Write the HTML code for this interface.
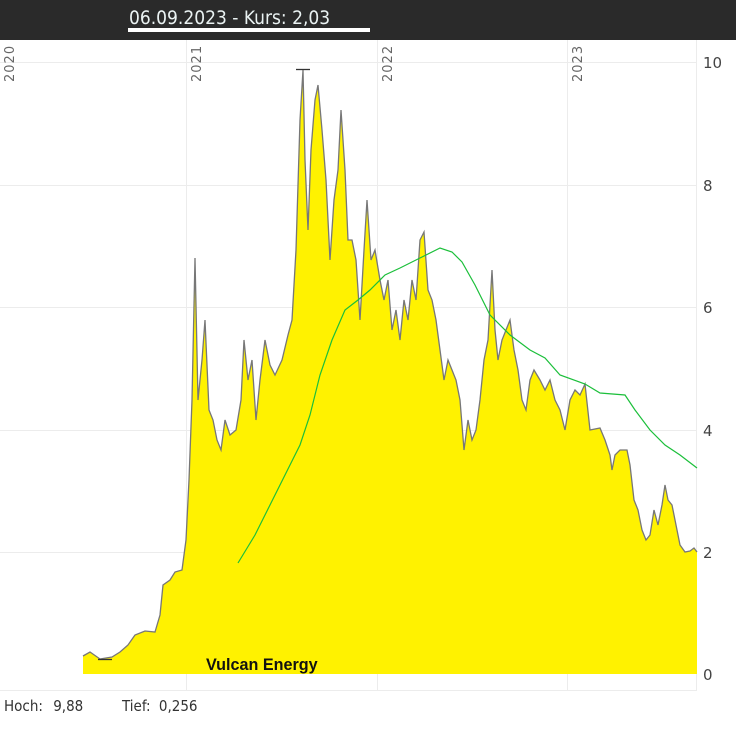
<!DOCTYPE html>
<html><head><meta charset="utf-8"><style>
html,body{margin:0;padding:0;width:736px;height:729px;background:#fff;overflow:hidden;font-family:"Liberation Sans",sans-serif}
</style></head><body>
<svg width="736" height="729" viewBox="0 0 736 729" xmlns="http://www.w3.org/2000/svg">
<g stroke="#ececec" stroke-width="1">
<line x1="0" y1="62.5" x2="697" y2="62.5"/>
<line x1="0" y1="185.5" x2="697" y2="185.5"/>
<line x1="0" y1="307.5" x2="697" y2="307.5"/>
<line x1="0" y1="430.5" x2="697" y2="430.5"/>
<line x1="0" y1="552.5" x2="697" y2="552.5"/>
<line x1="0" y1="690.5" x2="697" y2="690.5"/>
<line x1="186.5" y1="40" x2="186.5" y2="690"/>
<line x1="377.5" y1="40" x2="377.5" y2="690"/>
<line x1="567.5" y1="40" x2="567.5" y2="690"/>
<line x1="696.5" y1="40" x2="696.5" y2="690"/>
</g>
<polygon fill="#fff200" points="83,674 83,656 90,652 100,659 112,657 120,652 128,645 135,635 145,631 155,632 160,615 163,585 170,580 175,572 182,570 186,540 189,480 192,400 195,258 198,400 202,360 205,320 209,410 213,420 217,440 221,450 225,420 230,435 236,430 241,400 244,340 248,380 252,360 256,420 260,380 265,340 270,365 275,375 282,360 288,335 292,320 296,250 300,120 303,70 305,160 308,230 311,150 315,100 318,85 322,130 326,180 330,260 334,200 338,170 341,110 345,170 348,240 352,240 356,260 360,320 364,250 367,200 371,260 375,250 380,280 384,300 388,280 392,330 396,310 400,340 404,300 408,320 412,280 416,300 420,240 424,232 428,290 432,300 436,320 440,350 444,380 448,360 452,370 456,380 460,400 464,450 468,420 472,440 476,430 480,400 484,360 488,340 492,270 495,330 498,360 502,340 506,330 510,320 514,350 518,370 522,400 526,410 530,380 534,370 540,380 545,390 550,380 555,400 560,410 565,430 570,400 575,390 580,395 585,384 590,430 600,428 605,440 610,455 612,470 615,455 620,450 627,450 630,465 634,500 638,510 642,530 646,540 650,535 654,510 658,525 662,505 665,485 668,500 672,505 675,520 680,545 685,552 690,551 694,548 697,552 697,674"/>
<polyline fill="none" stroke="#777" stroke-width="1.3" points="83,656 90,652 100,659 112,657 120,652 128,645 135,635 145,631 155,632 160,615 163,585 170,580 175,572 182,570 186,540 189,480 192,400 195,258 198,400 202,360 205,320 209,410 213,420 217,440 221,450 225,420 230,435 236,430 241,400 244,340 248,380 252,360 256,420 260,380 265,340 270,365 275,375 282,360 288,335 292,320 296,250 300,120 303,70 305,160 308,230 311,150 315,100 318,85 322,130 326,180 330,260 334,200 338,170 341,110 345,170 348,240 352,240 356,260 360,320 364,250 367,200 371,260 375,250 380,280 384,300 388,280 392,330 396,310 400,340 404,300 408,320 412,280 416,300 420,240 424,232 428,290 432,300 436,320 440,350 444,380 448,360 452,370 456,380 460,400 464,450 468,420 472,440 476,430 480,400 484,360 488,340 492,270 495,330 498,360 502,340 506,330 510,320 514,350 518,370 522,400 526,410 530,380 534,370 540,380 545,390 550,380 555,400 560,410 565,430 570,400 575,390 580,395 585,384 590,430 600,428 605,440 610,455 612,470 615,455 620,450 627,450 630,465 634,500 638,510 642,530 646,540 650,535 654,510 658,525 662,505 665,485 668,500 672,505 675,520 680,545 685,552 690,551 694,548 697,552"/>
<line x1="296" y1="69.5" x2="310" y2="69.5" stroke="#333" stroke-width="1.3"/>
<line x1="98" y1="659.5" x2="112" y2="659.5" stroke="#333" stroke-width="1.3"/>
<polyline fill="none" stroke="#1bbf3a" stroke-width="1.2" points="238,563 255,535 270,505 285,475 300,445 310,415 320,375 332,340 345,310 358,300 370,290 385,275 400,268 420,258 440,248 452,252 462,262 475,285 490,315 510,335 530,350 545,358 560,375 585,384 600,393 625,395 635,410 650,430 665,445 680,455 697,468"/>
<text x="206" y="670" font-size="17" font-weight="bold" fill="#111" transform="translate(206,0) scale(0.95,1) translate(-206,0)">Vulcan Energy</text>
<g font-size="15" fill="#444" font-family="'DejaVu Sans',sans-serif">
<text x="703" y="68">10</text>
<text x="703" y="191">8</text>
<text x="703" y="313">6</text>
<text x="703" y="436">4</text>
<text x="703" y="558">2</text>
<text x="703" y="680">0</text>
</g>
<g font-size="13" fill="#666" font-family="'DejaVu Sans',sans-serif" letter-spacing="1">
<text transform="translate(14,82) rotate(-90)">2020</text>
<text transform="translate(201,82) rotate(-90)">2021</text>
<text transform="translate(392,82) rotate(-90)">2022</text>
<text transform="translate(582,82) rotate(-90)">2023</text>
</g>
<text x="4" y="711" font-size="15" fill="#333" word-spacing="6" font-family="'DejaVu Sans Condensed','DejaVu Sans',sans-serif">Hoch: 9,88</text>
<text x="122" y="711" font-size="15" fill="#333" word-spacing="4" font-family="'DejaVu Sans Condensed','DejaVu Sans',sans-serif">Tief: 0,256</text>
<rect x="0" y="0" width="736" height="40" fill="#2a2a2a"/>
<text x="129" y="24" font-size="19" fill="#eaf2f2" font-family="'DejaVu Sans Condensed','DejaVu Sans',sans-serif">06.09.2023  -  Kurs: 2,03</text>
<rect x="128" y="28" width="242" height="4" fill="#fff"/>
</svg>
</body></html>
